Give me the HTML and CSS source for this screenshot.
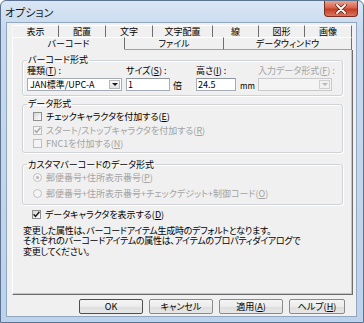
FILE: index.html
```html
<!DOCTYPE html>
<html lang="ja">
<head>
<meta charset="utf-8">
<title>オプション</title>
<link rel="stylesheet" href="styles.css">
</head>
<body>
<div class="window">
  <div class="titlebar">
    <span class="title">オプション</span>
    <div class="close">
      <svg width="12" height="10" viewBox="0 0 12 10">
        <path d="M2 1 L10 9 M10 1 L2 9" stroke="#5a1f14" stroke-width="3.2" stroke-linecap="round"/>
        <path d="M2 1 L10 9 M10 1 L2 9" stroke="#ffffff" stroke-width="1.8" stroke-linecap="round"/>
      </svg>
    </div>
  </div>
  <div class="client">
    <div class="tabs">
      <div class="tabrow row1">
        <div class="tab first">表示</div>
        <div class="tab">配置</div>
        <div class="tab">文字</div>
        <div class="tab">文字配置</div>
        <div class="tab">線</div>
        <div class="tab">図形</div>
        <div class="tab">画像</div>
      </div>
      <div class="tabrow row2">
        <div class="tab first selected">バーコード</div>
        <div class="tab">ファイル</div>
        <div class="tab">データウィンドウ</div>
      </div>
    </div>
    <div class="panel">
      <fieldset class="group g1">
        <legend>バーコード形式</legend>
        <div class="fmt-grid">
          <div class="lbl">種類(<u>T</u>) :</div>
          <div class="lbl">サイズ(<u>S</u>) :</div>
          <div class="lbl">高さ(<u>I</u>) :</div>
          <div class="lbl disabled">入力データ形式(<u>F</u>) :</div>
          <div class="select"><span class="sel-text">JAN標準/UPC-A</span><span class="arrow"><i></i></span></div>
          <div class="ctrl"><div class="input size">1</div><span class="unit">倍</span></div>
          <div class="ctrl"><div class="input height">24.5</div><span class="unit mm">mm</span></div>
          <div class="select dis"><span class="sel-text"></span><span class="arrow"><i></i></span></div>
        </div>
      </fieldset>

      <fieldset class="group g2">
        <legend>データ形式</legend>
        <div class="row chk-row"><span class="chk"></span><span>チェックキャラクタを付加する(<u>E</u>)</span></div>
        <div class="row chk-row disabled"><span class="chk on dis"><svg viewBox="0 0 9 9" width="9" height="9"><path d="M1.6 4.2 L3.6 6.4 L7.4 1.8" fill="none" stroke="#a8a8a8" stroke-width="1.5"/></svg></span><span>スタート/ストップキャラクタを付加する(<u>R</u>)</span></div>
        <div class="row chk-row disabled"><span class="chk dis"></span><span>FNC1を付加する(<u>N</u>)</span></div>
      </fieldset>

      <fieldset class="group g3">
        <legend>カスタマバーコードのデータ形式</legend>
        <div class="row radio-row disabled"><span class="radio on"></span><span>郵便番号+住所表示番号(<u>P</u>)</span></div>
        <div class="row radio-row disabled"><span class="radio"></span><span>郵便番号+住所表示番号+チェックデジット+制御コード(<u>O</u>)</span></div>
      </fieldset>

      <div class="row chk-row show-row"><span class="chk"><svg viewBox="0 0 9 9" width="9" height="9"><path d="M1.6 4.2 L3.6 6.4 L7.4 1.8" fill="none" stroke="#1c1c1c" stroke-width="1.5"/></svg></span><span>データキャラクタを表示する(<u>D</u>)</span></div>

      <div class="note">
        <div>変更した属性は、バーコードアイテム生成時のデフォルトとなります。</div>
        <div>それぞれのバーコードアイテムの属性は、アイテムのプロパティダイアログで</div>
        <div>変更してください。</div>
      </div>
    </div>
    <div class="buttons">
      <div class="btn default">OK</div>
      <div class="btn">キャンセル</div>
      <div class="btn">適用(<u>A</u>)</div>
      <div class="btn help">ヘルプ(<u>H</u>)</div>
    </div>
  </div>
</div>
</body>
</html>
```

FILE: styles.css
```css
* { box-sizing: border-box; }
html, body { margin: 0; padding: 0; }
body {
  width: 364px;
  height: 323px;
  overflow: hidden;
  background: #ffffff;
  font-family: "Noto Sans CJK JP", "Noto Sans", sans-serif;
  font-size: 9px;
  font-feature-settings: "palt";
  color: #000;
}
u { text-decoration: underline; text-underline-offset: 1px; }

.window {
  width: 364px;
  height: 323px;
  display: flex;
  flex-direction: column;
  background: linear-gradient(#d9e6f5, #c6d9ee 30px, #bdd2eb);
  border: 1px solid #5d7392;
  border-radius: 6px 6px 0 0;
}

.titlebar {
  height: 21px;
  flex: none;
  display: flex;
  align-items: flex-start;
  padding-left: 4px;
}
.title {
  font-size: 11px;
  line-height: 14px;
  margin-top: 4px;
  color: #1a1a1a;
}
.close {
  margin-left: auto;
  margin-right: 5px;
  width: 34px;
  height: 16px;
  border: 1px solid #7a2f22;
  border-top: none;
  border-radius: 0 0 4px 4px;
  background: linear-gradient(#eba493, #d9624b 45%, #c63c22 55%, #d87760);
  display: flex;
  align-items: center;
  justify-content: center;
}

.client {
  flex: 1;
  margin: 0 6px 5px 5px;
  background: #f0f0f0;
  border: 1px solid #93a6bf;
  padding: 2px 3px 0 5px;
  display: flex;
  flex-direction: column;
}

.tabs { width: 341px; }
.tabrow { display: grid; width: 340px; }
.row1 { height: 12px; grid-template-columns: 47px 47px 47px 60px 46px 46px 47px; }
.row2 { height: 13px; grid-template-columns: 113px 99px 128px; }
.tab {
  text-align: center;
  line-height: 11px;
  border-top: 1px solid #ffffff;
  border-right: 1px solid #6e6e6e;
  color: #000;
}
.row1 .tab { border-bottom: 1px solid #ffffff; }
.tab.first { border-left: 1px dotted #ffffff; }
.row2 .tab { border-bottom: 1px solid #a0a0a0; }
.row2 .tab.selected { border-bottom-color: transparent; border-left: 1px solid #ffffff; }

.panel {
  width: 341px;
  height: 245px;
  border-left: 1px solid #ffffff;
  border-right: 1px solid #6e6e6e;
  border-bottom: 1px solid #6e6e6e;
  box-shadow: inset -1px -1px 0 #c4c4c4;
  padding: 5px 9px 0 9px;
  display: flex;
  flex-direction: column;
}

.group {
  margin: 0;
  padding: 0 4px 4px 4px;
  border: 1px solid #cfd3d7;
  border-radius: 3px;
  box-shadow: inset 1px 1px 0 #ffffff, 1px 1px 0 #ffffff;
  min-width: 0;
}
.group legend {
  padding: 0 1px;
  margin: 0;
  line-height: 10px;
  font-size: 9px;
}

.fmt-grid {
  display: grid;
  grid-template-columns: 99px 70px 62px 74px;
  grid-template-rows: 11px 13px;
  row-gap: 2px;
}
.lbl { line-height: 11px; white-space: nowrap; }
.disabled { color: #a3a3a3; }

.select {
  width: 95px;
  height: 13px;
  border: 1px solid #a5acb5;
  background: #ffffff;
  display: flex;
  align-items: center;
  padding: 0 1px 0 2px;
}
.sel-text { line-height: 11px; white-space: nowrap; }
.arrow {
  margin-left: auto;
  width: 11px;
  height: 9px;
  border: 1px solid #b7b7b7;
  background: linear-gradient(#f6f6f6, #e2e2e2);
  display: flex;
  align-items: center;
  justify-content: center;
}
.arrow i {
  width: 0; height: 0;
  border-left: 3px solid transparent;
  border-right: 3px solid transparent;
  border-top: 3px solid #1a1a1a;
}
.select.dis { width: 74px; border-color: #c9c9c9; background: #f4f4f4; }
.select.dis .arrow { border-color: #d0d0d0; background: #f1f1f1; }
.select.dis .arrow i { border-top-color: #b9b9b9; }

.ctrl { display: flex; align-items: flex-end; }
.input {
  height: 13px;
  border: 1px solid #a5acb5;
  border-top-color: #8f959d;
  background: #ffffff;
  padding-left: 1px;
  line-height: 11px;
}
.input.size { width: 44px; }
.input.height { width: 40px; }
.unit { margin-left: 3px; line-height: 11px; }
.unit.mm { font-size: 8px; margin-left: 4px; }

.g2 { margin-top: 3px; padding-top: 1px; padding-bottom: 1px; }
.g3 { margin-top: 7px; padding-top: 2px; padding-bottom: 4px; display: flex; flex-direction: column; gap: 4px; }

.row { display: flex; align-items: center; white-space: nowrap; }
.g2 .row { height: 13.5px; padding-left: 6px; }
.g3 .row { height: 12px; padding-left: 6px; gap: 4px; }
.chk-row { gap: 4px; }

.chk {
  width: 9px;
  height: 9px;
  flex: none;
  border: 1px solid #8e8f8f;
  background: linear-gradient(135deg, #d6d6d6, #ffffff);
  display: flex;
  align-items: center;
  justify-content: center;
}
.chk svg { margin: -1px; }
.chk.dis { border-color: #bdbdbd; background: #f4f4f4; }

.radio {
  width: 9px;
  height: 9px;
  flex: none;
  border: 1px solid #c2c2c2;
  border-radius: 50%;
  background: #f4f4f4;
  display: flex;
  align-items: center;
  justify-content: center;
}
.radio.on::after {
  content: "";
  width: 3px;
  height: 3px;
  border-radius: 50%;
  background: #b5b5b5;
}

.show-row { margin-top: 4px; height: 12px; padding-left: 10px; }

.note {
  margin-top: 5px;
  margin-left: 1px;
  line-height: 10.5px;
  letter-spacing: -0.3px;
  white-space: nowrap;
}

.buttons {
  display: flex;
  justify-content: flex-end;
  gap: 6px;
  margin-top: 4px;
  padding-right: 8px;
}
.btn {
  width: 64px;
  height: 15px;
  border: 1px solid #8a8a8a;
  border-radius: 2px;
  background: linear-gradient(#f4f4f4, #ececec 50%, #dedede 51%, #e6e6e6);
  text-align: center;
  line-height: 13px;
  font-size: 9px;
}
.btn.default { border-color: #4d4d4d; }
.btn.help { width: 56px; }
```
